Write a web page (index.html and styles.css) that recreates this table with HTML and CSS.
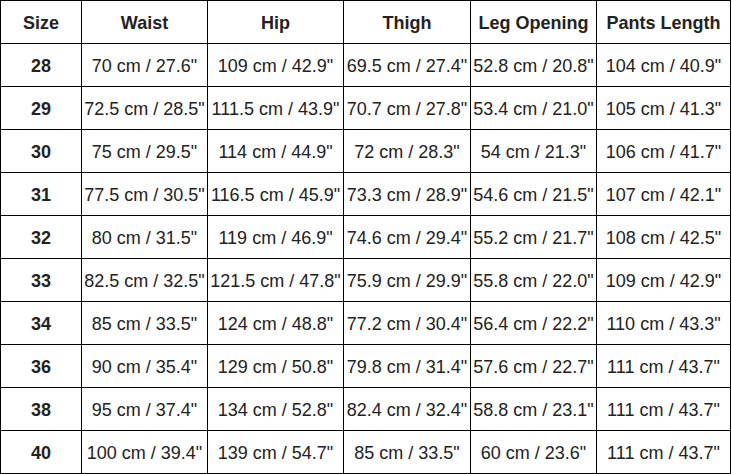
FILE: index.html
```html
<!DOCTYPE html>
<html>
<head>
<meta charset="utf-8">
<link rel="stylesheet" href="styles.css">
</head>
<body>
<div class="size-table">
  <div class="cell head"><span>Size</span></div><div class="cell head"><span>Waist</span></div><div class="cell head"><span>Hip</span></div><div class="cell head"><span>Thigh</span></div><div class="cell head"><span>Leg Opening</span></div><div class="cell head"><span>Pants Length</span></div>
  <div class="cell size"><span>28</span></div><div class="cell"><span>70 cm / 27.6"</span></div><div class="cell"><span>109 cm / 42.9"</span></div><div class="cell"><span>69.5 cm / 27.4"</span></div><div class="cell"><span>52.8 cm / 20.8"</span></div><div class="cell"><span>104 cm / 40.9"</span></div>
  <div class="cell size"><span>29</span></div><div class="cell"><span>72.5 cm / 28.5"</span></div><div class="cell"><span>111.5 cm / 43.9"</span></div><div class="cell"><span>70.7 cm / 27.8"</span></div><div class="cell"><span>53.4 cm / 21.0"</span></div><div class="cell"><span>105 cm / 41.3"</span></div>
  <div class="cell size"><span>30</span></div><div class="cell"><span>75 cm / 29.5"</span></div><div class="cell"><span>114 cm / 44.9"</span></div><div class="cell"><span>72 cm / 28.3"</span></div><div class="cell"><span>54 cm / 21.3"</span></div><div class="cell"><span>106 cm / 41.7"</span></div>
  <div class="cell size"><span>31</span></div><div class="cell"><span>77.5 cm / 30.5"</span></div><div class="cell"><span>116.5 cm / 45.9"</span></div><div class="cell"><span>73.3 cm / 28.9"</span></div><div class="cell"><span>54.6 cm / 21.5"</span></div><div class="cell"><span>107 cm / 42.1"</span></div>
  <div class="cell size"><span>32</span></div><div class="cell"><span>80 cm / 31.5"</span></div><div class="cell"><span>119 cm / 46.9"</span></div><div class="cell"><span>74.6 cm / 29.4"</span></div><div class="cell"><span>55.2 cm / 21.7"</span></div><div class="cell"><span>108 cm / 42.5"</span></div>
  <div class="cell size"><span>33</span></div><div class="cell"><span>82.5 cm / 32.5"</span></div><div class="cell"><span>121.5 cm / 47.8"</span></div><div class="cell"><span>75.9 cm / 29.9"</span></div><div class="cell"><span>55.8 cm / 22.0"</span></div><div class="cell"><span>109 cm / 42.9"</span></div>
  <div class="cell size"><span>34</span></div><div class="cell"><span>85 cm / 33.5"</span></div><div class="cell"><span>124 cm / 48.8"</span></div><div class="cell"><span>77.2 cm / 30.4"</span></div><div class="cell"><span>56.4 cm / 22.2"</span></div><div class="cell"><span>110 cm / 43.3"</span></div>
  <div class="cell size"><span>36</span></div><div class="cell"><span>90 cm / 35.4"</span></div><div class="cell"><span>129 cm / 50.8"</span></div><div class="cell"><span>79.8 cm / 31.4"</span></div><div class="cell"><span>57.6 cm / 22.7"</span></div><div class="cell"><span>111 cm / 43.7"</span></div>
  <div class="cell size"><span>38</span></div><div class="cell"><span>95 cm / 37.4"</span></div><div class="cell"><span>134 cm / 52.8"</span></div><div class="cell"><span>82.4 cm / 32.4"</span></div><div class="cell"><span>58.8 cm / 23.1"</span></div><div class="cell"><span>111 cm / 43.7"</span></div>
  <div class="cell size"><span>40</span></div><div class="cell"><span>100 cm / 39.4"</span></div><div class="cell"><span>139 cm / 54.7"</span></div><div class="cell"><span>85 cm / 33.5"</span></div><div class="cell"><span>60 cm / 23.6"</span></div><div class="cell"><span>111 cm / 43.7"</span></div>
</div>
</body>
</html>
```
FILE: styles.css
```css
html, body {
  margin: 0;
  padding: 0;
  background: #fff;
}
.size-table {
  display: grid;
  grid-template-columns: 80px 125px 135px 126px 125px 133px;
  grid-auto-rows: 42px;
  gap: 1px;
  padding: 1px;
  background: #000;
  width: max-content;
  font-family: "Liberation Sans", Arial, sans-serif;
  font-size: 18px;
  color: #222;
}
.cell {
  background: #fff;
  display: flex;
  align-items: center;
  justify-content: center;
  padding-top: 2px;
  white-space: nowrap;
  overflow: hidden;
}
.cell span {
  display: inline-block;
  transform: scaleY(1.07);
}
.head, .size {
  font-weight: bold;
}
```
